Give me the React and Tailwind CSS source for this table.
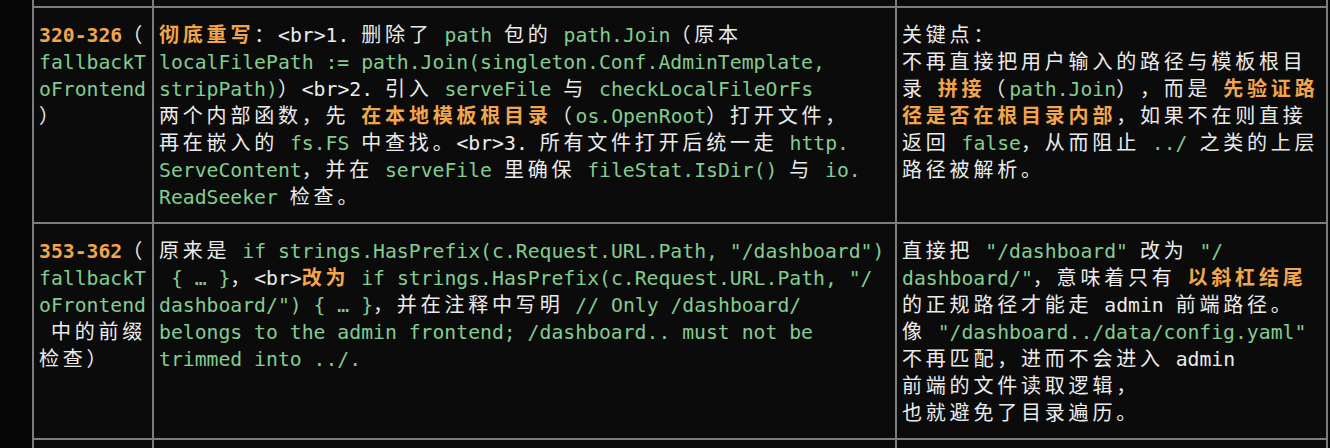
const ROWS = [
  [
    ['**320-326**（', '`fallbackT`', '`oFrontend`', '）'],
    [
      '**彻底重写**：<br>1. 删除了 `path` 包的 `path.Join`（原本',
      '`localFilePath := path.Join(singleton.Conf.AdminTemplate,`',
      '`stripPath)`）<br>2. 引入 `serveFile` 与 `checkLocalFileOrFs`',
      '两个内部函数，先 **在本地模板根目录**（`os.OpenRoot`）打开文件，',
      '再在嵌入的 `fs.FS` 中查找。<br>3. 所有文件打开后统一走 `http.`',
      '`ServeContent`，并在 `serveFile` 里确保 `fileStat.IsDir()` 与 `io.`',
      '`ReadSeeker` 检查。',
    ],
    [
      '关键点：',
      '不再直接把用户输入的路径与模板根目',
      '录 **拼接**（`path.Join`），而是 **先验证路**',
      '**径是否在根目录内部**，如果不在则直接',
      '返回 `false`，从而阻止 `../` 之类的上层',
      '路径被解析。',
    ],
  ],
  [
    ['**353-362**（', '`fallbackT`', '`oFrontend`', ' 中的前缀', '检查）'],
    [
      '原来是 `if strings.HasPrefix(c.Request.URL.Path, "/dashboard")`',
      '` { … }`，<br>**改为** `if strings.HasPrefix(c.Request.URL.Path, "/`',
      '`dashboard/") { … }`，并在注释中写明 `// Only /dashboard/`',
      '`belongs to the admin frontend; /dashboard.. must not be`',
      '`trimmed into ../.`',
    ],
    [
      '直接把 `"/dashboard"` 改为 `"/`',
      '`dashboard/"`，意味着只有 **以斜杠结尾**',
      '的正规路径才能走 admin 前端路径。',
      '像 `"/dashboard../data/config.yaml"`',
      '不再匹配，进而不会进入 admin',
      '前端的文件读取逻辑，',
      '也就避免了目录遍历。',
    ],
  ],
];

const CJK = /[\u2e80-\u9fff\uff00-\uffef]/;

function parse(line) {
  return line
    .split(/(\*\*[^*]+\*\*|`[^`]+`)/)
    .filter(Boolean)
    .map((s) => {
      if (s.startsWith('**')) return ['b', s.slice(2, -2)];
      if (s.startsWith('`')) return ['c', s.slice(1, -1)];
      return ['t', s];
    });
}

// CJK runs take two monospace cells each
function Wide({ text }) {
  return text
    .split(/([\u2e80-\u9fff\uff00-\uffef]+)/)
    .filter(Boolean)
    .map((s, i) =>
      CJK.test(s) ? (
        <span key={i} className="font-['Noto_Sans_CJK_SC',sans-serif] text-[20px] leading-none tracking-[3.8px]">
          {s}
        </span>
      ) : (
        <span key={i}>{s}</span>
      ),
    );
}

const tone = {
  t: 'text-[#ebebeb]',
  c: 'text-[#82cd90]',
  b: 'font-bold text-[#f2a54a]',
};

function Cell({ lines }) {
  return (
    <div className="bg-[#0b0b0b] pt-[14px] pr-[5px] pb-[11px] pl-[5px]">
      {lines.map((line, i) => (
        <div key={i} className="h-[27px] whitespace-pre leading-[27px]">
          {parse(line).map(([k, s], j) => (
            <span key={j} className={tone[k]}>
              <Wide text={s} />
            </span>
          ))}
        </div>
      ))}
    </div>
  );
}

export default function App() {
  return (
    <div className="h-[448px] w-[1330px] overflow-hidden bg-[#050505] font-['DejaVu_Sans_Mono','Noto_Sans_CJK_SC',monospace] text-[19.75px] [text-spacing-trim:space-all]">
      <div className="ml-[32px] grid w-[1296px] grid-cols-[118px_741px_429px] gap-[2px] bg-[#7d7d7d] px-[2px]">
        <div className="h-[6px] bg-[#0b0b0b]" />
        <div className="h-[6px] bg-[#0b0b0b]" />
        <div className="h-[6px] bg-[#0b0b0b]" />
        {ROWS.map((row, r) => row.map((lines, c) => <Cell key={`${r}-${c}`} lines={lines} />))}
        <div className="h-[30px] bg-[#0b0b0b]" />
        <div className="h-[30px] bg-[#0b0b0b]" />
        <div className="h-[30px] bg-[#0b0b0b]" />
      </div>
    </div>
  );
}
